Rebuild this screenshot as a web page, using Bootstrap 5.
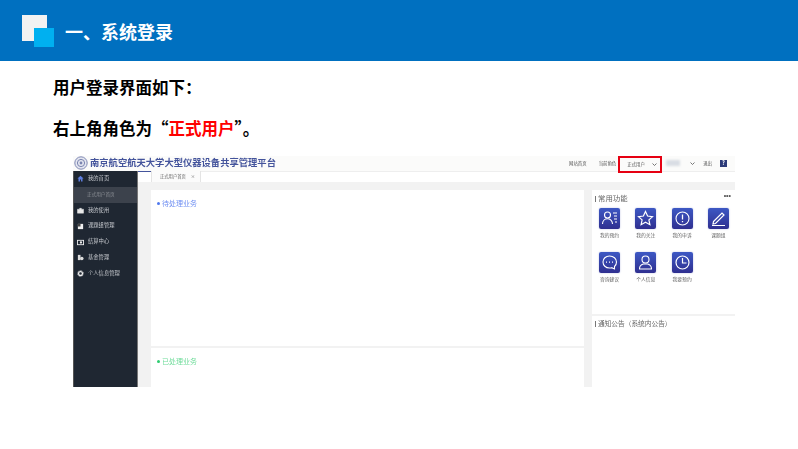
<!DOCTYPE html>
<html lang="zh-CN">
<head>
  <meta charset="UTF-8">
  <meta name="viewport" content="width=device-width, initial-scale=1.0">
  <title>系统登录</title>
  <link href="https://cdn.jsdelivr.net/npm/bootstrap@5.3.0/dist/css/bootstrap.min.css" rel="stylesheet">
  <style>
    html, body { height: 449px; overflow: hidden; }
    body { background: #fff; color: #000; font-family: "Noto Sans CJK SC", "Liberation Sans", sans-serif; }
    .slide-head { height: 61px; background: #0070c0; padding-left: 22px; }
    .logo-box { width: 32px; height: 32px; position: relative; margin-top: 1px; }
    .logo-back { position: absolute; left: 0; top: 0; width: 25px; height: 26px; background: #f2f2f2; }
    .logo-front { position: absolute; left: 12px; top: 13px; width: 20px; height: 19px; background: #00b0f0; }
    .slide-title { font-size: 18px; font-weight: 700; color: #fff; margin: 1px 0 0 11px; line-height: 1; }
    .slide-text { padding: 16px 0 0 53px; height: 95px; }
    .slide-text p { font-size: 16.5px; font-weight: 700; line-height: 20px; margin: 0 0 21px; }
    .red-word { color: #f00; }
    .shot { margin-left: 73px; width: 662px; height: 231px; font-size: 4.4px; color: #555; }
    .soft { filter: blur(.35px); }
    .shot-top { height: 15px; background: #fbfbfa; padding-right: 8px; }
    .top-row { height: 14px; }
    .shot-logo { width: 14px; height: 14px; margin-left: 1px; }
    .shot-name { font-size: 9.3px; font-weight: 700; color: #44549c; margin: 0 0 1px 2px; line-height: 1; }
    .role-box { width: 44px; height: 17px; border: 2px solid #e60012; margin-left: 2px; padding: 0 3px 0 7px; background: #fbfbfa; position: relative; z-index: 1; }
    .chev { width: 5px; height: 3px; }
    .user-blur { width: 14px; height: 6px; background: #d9dde4; filter: blur(1px); margin-left: 4px; }
    .chev-user { margin-left: 10px; }
    .link-gap { margin-right: 12px; }
    .help-ico { width: 7px; height: 7px; background: #2c3a78; color: #fff; font-size: 5.5px; font-weight: 700; line-height: 7px; text-align: center; }
    .shot-main { height: 216px; }
    .side-bar { width: 65px; background: #1f2732; border-left: 1px solid #555; border-right: 1px solid #777; color: #c6c9ce; }
    .side-row { height: 15.8px; padding-left: 3px; gap: 4px; font-size: 5.3px; white-space: nowrap; }
    .side-row svg { width: 7px; height: 7px; flex: none; }
    .side-sub { background: #3c424c; color: #8d9197; padding-left: 13px; font-size: 4.6px; }
    .work-area { background: #f2f2f2; min-width: 0; }
    .tab-line { height: 11px; background: #fff; }
    .tab-lead { width: 13px; border-top: 1px solid #44549c; }
    .tab-rest { border-top: 1px solid #eeeeee; }
    .tab-item { width: 50px; height: 11px; background: #fbfbfb; border-right: 1px solid #e4e4e4; border-left: 1px solid #e4e4e4; padding: 0 5px 0 8px; font-size: 4.3px; color: #666; }
    .panels { padding: 8px 0 0 13px; height: 205px; gap: 8px; }
    .panel-left { width: 434px; gap: 2px; }
    .panel-right { width: 143px; gap: 2px; }
    .work-card { background: #fff; }
    .todo-card { height: 156px; padding: 8px 6px; }
    .done-card { flex: 1; padding: 8px 6px; }
    .tag-blue { color: #6f8ff2; font-size: 7px; line-height: 10px; }
    .tag-green { color: #6fdc9a; font-size: 7px; line-height: 10px; }
    .dot-mark { display: inline-block; width: 3px; height: 3px; border-radius: 50%; margin-right: 2px; vertical-align: 1px; }
    .dot-blue { background: #4f78ee; }
    .dot-green { background: #2ecc71; }
    .func-card { height: 124px; padding: 3px 4px 0 3px; }
    .notice-card { flex: 1; padding: 2px 3px; }
    .card-head { font-size: 7.4px; color: #666; line-height: 10px; }
    .notice-head { font-size: 6.7px; }
    .bar-mark { display: inline-block; width: 1px; height: 6px; background: #777; margin-right: 2px; vertical-align: -1px; }
    .more-dots { font-family: "Liberation Sans", sans-serif; font-size: 7px; line-height: 6px; color: #555; font-weight: 700; }
    .func-grid { display: grid; grid-template-columns: repeat(4, 36.3px); row-gap: 13px; padding: 5px 0 0 4px; }
    .func-item { text-align: center; width: 21px; font-size: 4.8px; line-height: 8px; color: #666; white-space: nowrap; }
    .func-ico { width: 21px; height: 21px; border-radius: 2px; background: linear-gradient(#3d58c4, #2f2f90); margin: 0 auto 2px; box-shadow: 0 0 2px #b9bfe0; display: block; }
  </style>
</head>
<body>

<!-- 标题栏 -->
<div class="slide-head d-flex align-items-center">
  <div class="logo-box"><div class="logo-back"></div><div class="logo-front"></div></div>
  <div class="slide-title">一、系统登录</div>
</div>

<div class="slide-text">
  <p>用户登录界面如下：</p>
  <p>右上角角色为“<span class="red-word">正式用户</span>”。</p>
</div>

<!-- 截图区域 -->
<div class="shot">
  <div class="shot-top d-flex align-items-start">
    <svg class="shot-logo soft" viewBox="0 0 14 14"><circle cx="7" cy="7" r="6.2" fill="#e4e6f0" stroke="#8089b4"/><circle cx="7" cy="7" r="3.6" fill="none" stroke="#7a84b0"/><circle cx="7" cy="7" r="1.4" fill="#7a84b0"/></svg>
    <div class="top-row d-flex align-items-center soft"><div class="shot-name">南京航空航天大学大型仪器设备共享管理平台</div></div>
    <div class="ms-auto top-row d-flex align-items-center">
      <span class="link-gap soft">网站首页</span>
      <span class="soft">当前角色</span>
      <div class="role-box d-flex align-items-center justify-content-between align-self-start">
        <span class="soft">正式用户</span>
        <svg class="chev" viewBox="0 0 5 3"><path d="M.5.5 2.5 2.500 4.500.5" fill="none" stroke="#555" stroke-width=".8"/></svg>
      </div>
      <div class="user-blur"></div>
      <svg class="chev chev-user" viewBox="0 0 5 3"><path d="M.5.5 2.5 2.500 4.500.5" fill="none" stroke="#555" stroke-width=".8"/></svg>
      <span class="ms-2 soft">退出</span>
      <div class="help-ico ms-2 soft">?</div>
    </div>
  </div>

  <div class="shot-main d-flex soft">
    <div class="side-bar flex-shrink-0">
      <div class="side-row d-flex align-items-center"><svg viewBox="0 0 8 8"><path d="M4 .8.500 4h1.200v3.300h1.700V5h1.200v2.300h1.700V4h1.200z" fill="#5f7fe0"/></svg>我的首页</div>
      <div class="side-row side-sub d-flex align-items-center">正式用户首页</div>
      <div class="side-row d-flex align-items-center"><svg viewBox="0 0 8 8"><path d="M.500 2.500h7v4.500h-7zM3 2.500V1.500h2v1" fill="#e8e8e8" stroke="#e8e8e8" stroke-width=".5"/></svg>我的使用</div>
      <div class="side-row d-flex align-items-center"><svg viewBox="0 0 8 8"><path d="M1 1h6v6H1z" fill="#eee"/><path d="M1 1h3v3H1z" fill="#444"/></svg>课题组管理</div>
      <div class="side-row d-flex align-items-center"><svg viewBox="0 0 8 8"><rect x=".5" y="1.500" width="7" height="5" fill="none" stroke="#eee"/><circle cx="4.500" cy="4" r="1.300" fill="#eee"/></svg>结算中心</div>
      <div class="side-row d-flex align-items-center"><svg viewBox="0 0 8 8"><path d="M1 1h3v6H1z" fill="#ddd"/><circle cx="5.500" cy="5" r="2" fill="#ddd"/></svg>基金管理</div>
      <div class="side-row d-flex align-items-center"><svg viewBox="0 0 8 8"><circle cx="4" cy="4" r="2.200" fill="none" stroke="#eee" stroke-width="1.400"/><circle cx="4" cy="4" r="3.400" fill="none" stroke="#eee" stroke-width=".9" stroke-dasharray="1 1.100"/></svg>个人信息管理</div>
    </div>

    <div class="work-area flex-grow-1">
      <div class="tab-line d-flex">
        <div class="tab-lead"></div>
        <div class="tab-item d-flex align-items-center justify-content-between"><span>正式用户首页</span><span>×</span></div>
        <div class="tab-rest flex-grow-1"></div>
      </div>
      <div class="panels d-flex">
        <div class="panel-left d-flex flex-column">
          <div class="work-card todo-card"><div class="tag-blue"><span class="dot-mark dot-blue"></span>待处理业务</div></div>
          <div class="work-card done-card"><div class="tag-green"><span class="dot-mark dot-green"></span>已处理业务</div></div>
        </div>
        <div class="panel-right d-flex flex-column">
          <div class="work-card func-card">
            <div class="d-flex justify-content-between card-head"><span><span class="bar-mark"></span>常用功能</span><span class="more-dots">•••</span></div>
            <div class="func-grid">
              <div class="func-item"><svg class="func-ico" viewBox="0 0 21 21"><g fill="none" stroke="#fff" stroke-width="1.100"><circle cx="8.500" cy="7" r="3"/><path d="M3.500 16c0-7 10-7 10 0M14 5h4M15 8h3M15 11h3M16 14h2"/></g></svg>我的预约</div>
              <div class="func-item"><svg class="func-ico" viewBox="0 0 21 21"><path d="M10.500 3.500 12.600 8l4.900.6-3.600 3.300 1 4.800-4.400-2.400-4.400 2.400 1-4.800-3.600-3.300L8.400 8z" fill="none" stroke="#fff" stroke-width="1.200"/></svg>我的关注</div>
              <div class="func-item"><svg class="func-ico" viewBox="0 0 21 21"><circle cx="10.500" cy="10.500" r="6.500" fill="none" stroke="#fff" stroke-width="1.100"/><path d="M10.500 6.500v5M10.500 13v1.300" stroke="#fff" stroke-width="1.300"/></svg>我的申诉</div>
              <div class="func-item"><svg class="func-ico" viewBox="0 0 21 21"><path d="M5.500 13.500 14 5l2 2-8.500 8.500-2.500.5zM4 17.500h13" fill="none" stroke="#fff" stroke-width="1.200"/></svg>课题组</div>
              <div class="func-item"><svg class="func-ico" viewBox="0 0 21 21"><path d="M10.500 4c-3.800 0-6.500 2.700-6.500 6 0 3.400 2.700 6 6.500 6 .8 0 1.500-.1 2.200-.3l2.800 1.300v-2.500c1.300-1.100 2-2.700 2-4.500 0-3.300-3-6-7-6z" fill="none" stroke="#fff" stroke-width="1.100"/><path d="M7 10.200h1M10 10.200h1M13 10.200h1" stroke="#fff" stroke-width="1.200"/></svg>咨询建议</div>
              <div class="func-item"><svg class="func-ico" viewBox="0 0 21 21"><circle cx="10.500" cy="7.500" r="3.500" fill="none" stroke="#fff" stroke-width="1.100"/><path d="M4.500 17c0-2.800 2-4.500 3.800-5h4.400c1.800.5 3.800 2.200 3.800 5z" fill="none" stroke="#fff" stroke-width="1.100"/></svg>个人信息</div>
              <div class="func-item"><svg class="func-ico" viewBox="0 0 21 21"><circle cx="10.500" cy="10.500" r="6.500" fill="none" stroke="#fff" stroke-width="1.200"/><path d="M10.500 6v5h4" fill="none" stroke="#fff" stroke-width="1.200"/></svg>我要预约</div>
            </div>
          </div>
          <div class="work-card notice-card"><div class="card-head notice-head"><span class="bar-mark"></span>通知公告（系统内公告）</div></div>
        </div>
      </div>
    </div>
  </div>
</div>

<script src="https://cdn.jsdelivr.net/npm/bootstrap@5.3.0/dist/js/bootstrap.bundle.min.js"></script>
</body>
</html>
